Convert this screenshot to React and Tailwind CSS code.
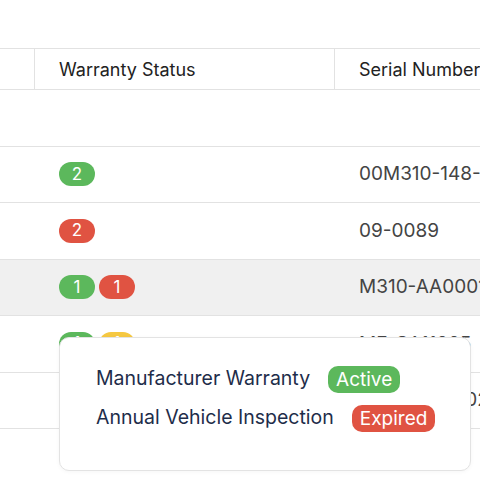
const rows = [
  { badges: [], serial: '' },
  { badges: [{ n: 2, c: 'green' }], serial: '00M310-148-0021' },
  { badges: [{ n: 2, c: 'red' }], serial: '09-0089' },
  { badges: [{ n: 1, c: 'green' }, { n: 1, c: 'red' }], serial: 'M310-AA00012', hover: true },
  { badges: [{ n: 1, c: 'green' }, { n: 1, c: 'yellow' }], serial: 'MF-SA11025' },
  { badges: [], serial: 'M310-AB0002' },
];

const colors = {
  green: 'bg-[#5cb85c]',
  red: 'bg-[#e05342]',
  yellow: 'bg-[#f5c842]',
};

function Badge({ n, c }) {
  return (
    <span className={`${colors[c]} inline-flex h-[24px] w-[36px] items-center justify-center rounded-full text-[17px] leading-none text-white`}>
      {n}
    </span>
  );
}

export default function App() {
  return (
    <div
      className="relative h-[480px] w-[480px] overflow-hidden bg-white"
      style={{ fontFamily: 'Inter, "Noto Sans", sans-serif' }}
    >
      <div className="pt-[48px]">
        <div className="w-[700px]">
          <div className="flex h-[42px] border-y border-[#e2e2e2] text-[18px] text-[#222]">
            <div className="w-[35px] shrink-0 border-r border-[#e2e2e2]" />
            <div className="flex w-[300px] shrink-0 items-center border-r border-[#e2e2e2] pl-[24px]">
              Warranty Status
            </div>
            <div className="flex items-center pl-[24px]">Serial Number</div>
          </div>

          {rows.map((r, i) => (
            <div
              key={i}
              className={`flex h-[56.5px] border-b border-[#e2e2e2] text-[19px] text-[#444] ${r.hover ? 'bg-[#f0f0f0]' : ''}`}
            >
              <div className="w-[35px] shrink-0" />
              <div className="flex w-[300px] shrink-0 items-center gap-[4px] pl-[24px]">
                {r.badges.map((b, j) => (
                  <Badge key={j} {...b} />
                ))}
              </div>
              <div className="flex items-center whitespace-nowrap pl-[24px]">{r.serial}</div>
            </div>
          ))}
        </div>
      </div>

      <div className="absolute left-[59px] top-[337px] flex h-[134px] w-[412px] flex-col justify-center gap-[12px] rounded-[10px] border border-[#e3e3e3] bg-white pb-[13px] pl-[36px] text-[19.5px] leading-[27px] text-[#1e2d4a] shadow-[0_1px_4px_rgba(0,0,0,0.04)]">
        <div className="flex h-[27px] items-center gap-[18px]">
          <span>Manufacturer Warranty</span>
          <span className="mt-[2px] inline-flex h-[27px] items-center rounded-[10px] bg-[#5cb85c] px-[8px] text-[19px] leading-none text-white">
            Active
          </span>
        </div>
        <div className="flex h-[27px] items-center gap-[18px]">
          <span>Annual Vehicle Inspection</span>
          <span className="mt-[2px] inline-flex h-[27px] items-center rounded-[10px] bg-[#e05342] px-[8px] text-[19px] leading-none text-white">
            Expired
          </span>
        </div>
      </div>
    </div>
  );
}
